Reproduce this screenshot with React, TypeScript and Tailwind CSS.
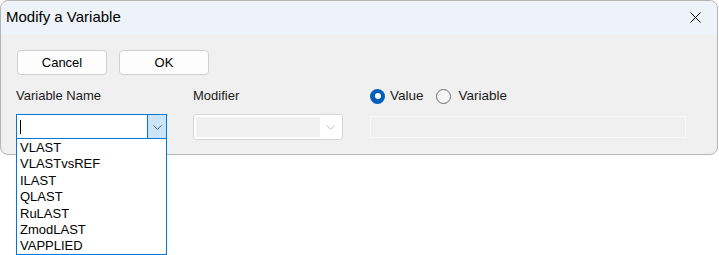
import { FiChevronDown } from 'react-icons/fi';

const items = ['VLAST', 'VLASTvsREF', 'ILAST', 'QLAST', 'RuLAST', 'ZmodLAST', 'VAPPLIED'];

function Radio({ checked }: { checked?: boolean }) {
  return checked ? (
    <span className="w-[15px] h-[15px] rounded-full bg-[#005fb8] flex items-center justify-center">
      <span className="w-[6px] h-[6px] rounded-full bg-white" />
    </span>
  ) : (
    <span className="w-[15px] h-[15px] rounded-full border border-[#6b6b6b] bg-[#f6f6f6]" />
  );
}

export default function App() {
  return (
    <div className="relative w-[719px] h-[255px] bg-white font-['Liberation_Sans',Arial,sans-serif] text-[13px] text-[#1a1a1a]">
      {/* dialog window */}
      <div className="w-[718px] h-[155px] rounded-lg border border-[#b4b4b4] bg-[#f0f0f0] flex flex-col">
        <div className="h-[33px] shrink-0 rounded-t-lg bg-[#eef3f9] flex items-center justify-between pl-[5px] pr-[16px]">
          <span className="text-[15px] text-black">Modify a Variable</span>
          <svg width="11" height="11" viewBox="0 0 11 11" className="text-black">
            <path d="M0.5 0.5 L10.5 10.5 M10.5 0.5 L0.5 10.5" stroke="currentColor" strokeWidth="1" />
          </svg>
        </div>

        <div className="flex flex-col pl-[15px] pt-[16px]">
          {/* buttons */}
          <div className="flex gap-[12px] ml-[1px]">
            <button className="w-[90px] h-[25px] rounded-[4px] border border-[#d0d0d0] bg-[#fdfdfd] text-[13px] text-black">
              Cancel
            </button>
            <button className="w-[90px] h-[25px] rounded-[4px] border border-[#d0d0d0] bg-[#fdfdfd] text-[13px] text-black">
              OK
            </button>
          </div>

          {/* fields */}
          <div className="flex mt-[13px]">
            <div className="w-[151px] flex flex-col">
              <div className="h-[26px] leading-[16px]">Variable Name</div>
              <div className="h-[26px] flex border border-[#0078d7] bg-white">
                <div className="flex-1 flex items-center pl-[3px]">
                  <span className="w-[1px] h-[14px] bg-black" />
                </div>
                <div className="w-[19px] bg-[#cce4f7] border-l border-[#0078d7] flex items-center justify-center">
                  <FiChevronDown size={15} className="text-[#4a5560]" strokeWidth={1.5} />
                </div>
              </div>
            </div>

            <div className="w-[150px] ml-[26px] flex flex-col">
              <div className="h-[26px] leading-[16px]">Modifier</div>
              <div className="h-[26px] flex items-stretch border border-[#d6d6d6] rounded-[3px] bg-white p-[2px]">
                <div className="w-[124px] bg-[#f0f0f0]" />
                <div className="flex-1 flex items-center justify-center">
                  <FiChevronDown size={15} className="text-[#bdbdbd]" strokeWidth={1.5} />
                </div>
              </div>
            </div>

            <div className="w-[316px] ml-[27px] flex flex-col">
              <div className="h-[28px] flex items-start">
                <div className="h-[16px] flex items-center text-[13.5px]">
                  <Radio checked />
                  <span className="ml-[5px]">Value</span>
                  <span className="ml-[12px]" />
                  <Radio />
                  <span className="ml-[8px]">Variable</span>
                </div>
              </div>
              <div className="h-[22px] border border-[#f8f8f8] bg-[#f0f0f0]" />
            </div>
          </div>
        </div>
      </div>

      {/* open dropdown list */}
      <div className="absolute left-[16px] top-[138px] w-[151px] h-[117px] border border-[#0078d7] bg-white pl-[3px] pt-[1px]">
        {items.map((it) => (
          <div key={it} className="leading-[16.4px] text-[13px] text-black">
            {it}
          </div>
        ))}
      </div>
    </div>
  );
}
